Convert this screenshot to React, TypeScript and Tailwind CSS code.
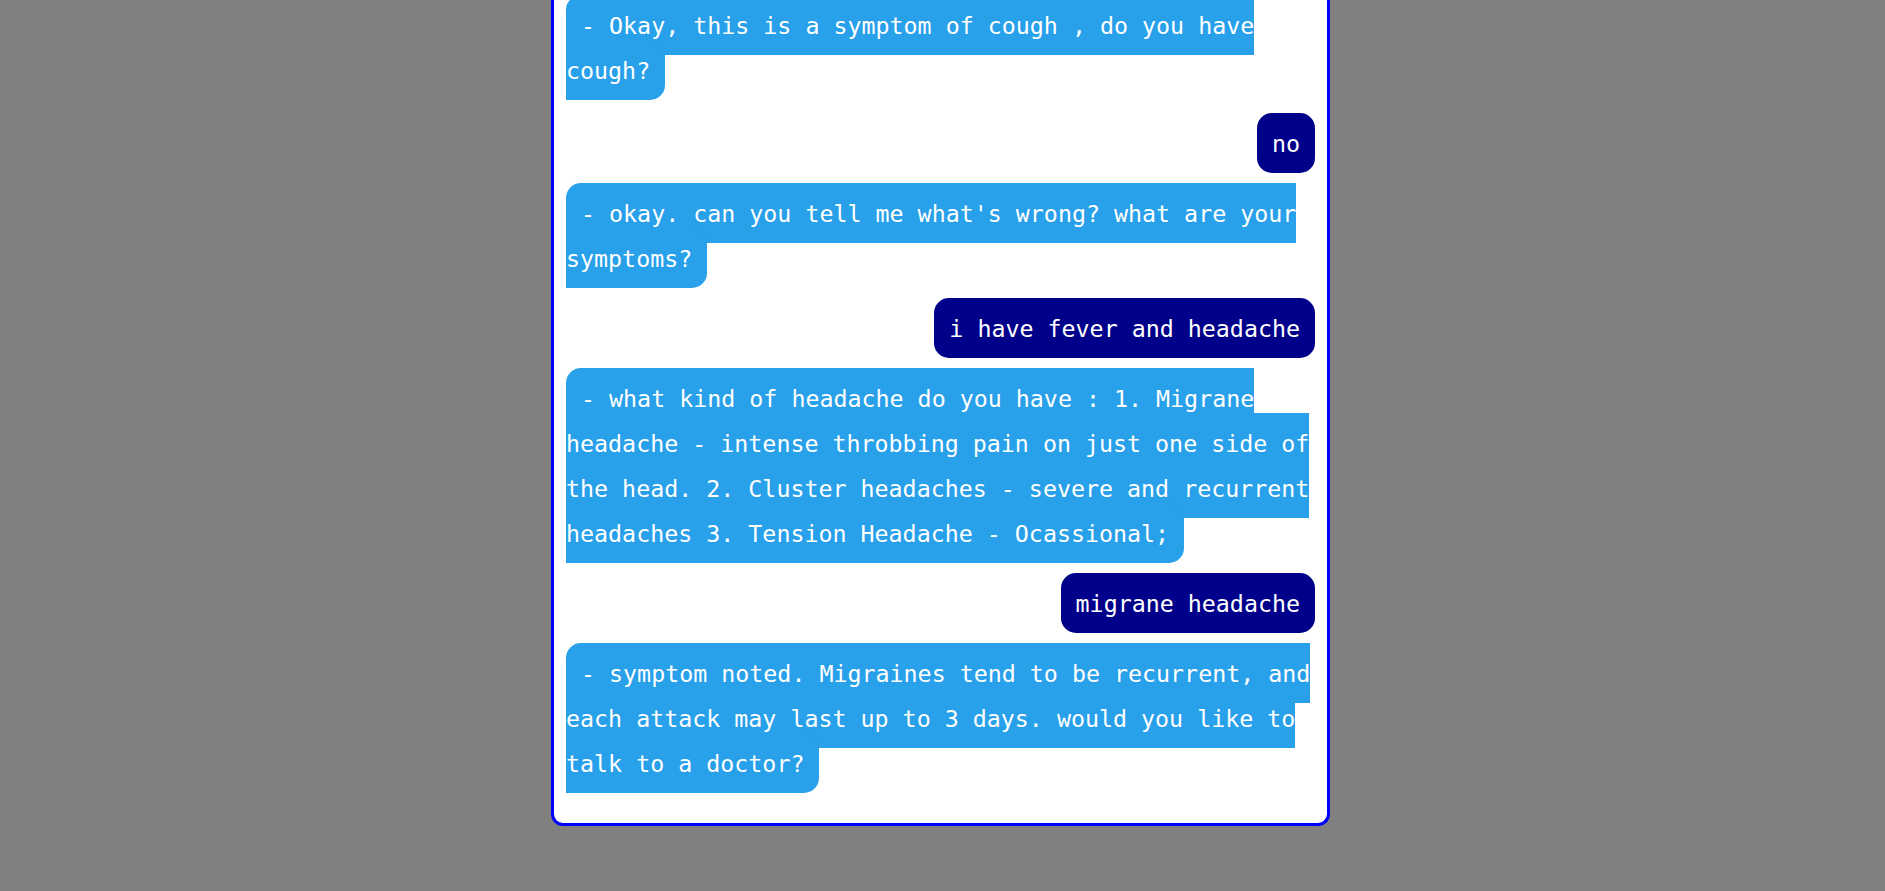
import React from 'react';

type Message = { from: 'bot' | 'user'; text: string };

const messages: Message[] = [
  { from: 'bot', text: ' - Okay, this is a symptom of cough , do you have cough?' },
  { from: 'user', text: 'no' },
  { from: 'bot', text: " - okay. can you tell me what's wrong? what are your symptoms?" },
  { from: 'user', text: 'i have fever and headache' },
  {
    from: 'bot',
    text: ' - what kind of headache do you have : 1. Migrane headache - intense throbbing pain on just one side of the head. 2. Cluster headaches - severe and recurrent headaches 3. Tension Headache - Ocassional;',
  },
  { from: 'user', text: 'migrane headache' },
  {
    from: 'bot',
    text: ' - symptom noted. Migraines tend to be recurrent, and each attack may last up to 3 days. would you like to talk to a doctor?',
  },
];

const App: React.FC = () => {
  return (
    <div className="h-screen bg-[#808080] flex justify-center items-start pr-[4px]">
      {/* chat window, scrolled to the bottom so its top sits above the viewport */}
      <div className="w-[779px] h-[826px] bg-white border-x-[3px] border-b-[3px] border-[#0000ff] rounded-b-[12px] overflow-hidden flex flex-col justify-end px-[12px] pb-[13px] font-['DejaVu_Sans_Mono',monospace] text-[23.3px] leading-[45px] text-white">
        {messages.map((m, i) =>
          m.from === 'bot' ? (
            <div key={i} className="shrink-0 mb-[25px] first:mb-[28px] text-left">
              <span className="bg-[#28a0ea] px-[15px] py-[16.5px] rounded-[15px]">{m.text}</span>
            </div>
          ) : (
            <div key={i} className="shrink-0 mb-[25px] text-right">
              <span className="bg-[#00008b] px-[15px] py-[16.5px] rounded-[15px]">{m.text}</span>
            </div>
          )
        )}
      </div>
    </div>
  );
};

export default App;
